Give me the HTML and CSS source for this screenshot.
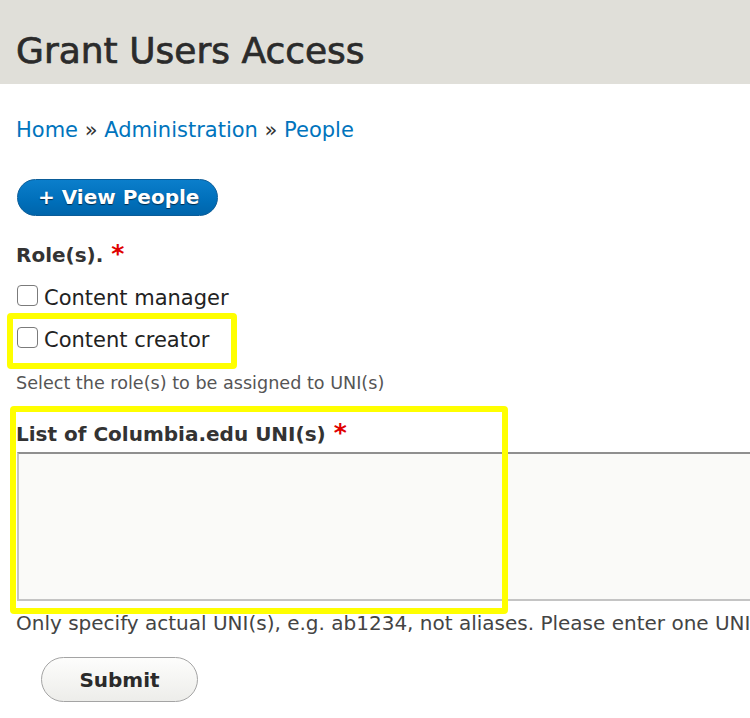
FILE: index.html
```html
<!DOCTYPE html>
<html lang="en">
<head>
<meta charset="utf-8">
<title>Grant Users Access</title>
<link rel="stylesheet" href="styles.css">
</head>
<body>
<header class="page-header">
  <h1 class="page-title">Grant Users Access</h1>
</header>
<main class="content">
  <nav class="breadcrumb"><a href="#">Home</a> » <a href="#">Administration</a> » <a href="#">People</a></nav>
  <div class="action-links">
    <a class="action-btn" href="#">+ View People</a>
  </div>
  <form class="grant-form">
    <div class="form-item roles">
      <div class="form-label">Role(s). <span class="req">*</span></div>
      <label class="check-row"><input type="checkbox" class="check"><span class="check-label">Content manager</span></label>
      <label class="check-row highlight hl-role"><input type="checkbox" class="check"><span class="check-label">Content creator</span></label>
      <div class="description">Select the role(s) to be assigned to UNI(s)</div>
    </div>
    <div class="form-item unis highlight hl-unis">
      <label class="form-label" for="unis">List of Columbia.edu UNI(s) <span class="req">*</span></label>
      <textarea id="unis" class="uni-text"></textarea>
    </div>
    <div class="description wide">Only specify actual UNI(s), e.g. ab1234, not aliases. Please enter one UNI per line.</div>
    <div class="form-actions">
      <button type="button" class="submit-btn">Submit</button>
    </div>
  </form>
</main>
</body>
</html>
```
FILE: styles.css
```css
html, body {
  margin: 0;
  padding: 0;
  overflow: hidden;
  background: #ffffff;
}
body {
  font-family: "DejaVu Sans", Verdana, sans-serif;
  color: #333333;
}
.page-header {
  background: #e0dfd9;
  height: 84px;
  box-sizing: border-box;
  padding: 30px 16px 0;
}
.page-title {
  margin: 0;
  font-size: 36px;
  line-height: 42px;
  font-weight: 400;
  color: #2b2b2b;
  -webkit-text-stroke: 0.7px #2b2b2b;
  white-space: nowrap;
}
.content {
  width: 1000px;
  padding: 31px 16px 0;
}
.breadcrumb {
  font-size: 21px;
  line-height: 30px;
  color: #333333;
}
.breadcrumb a {
  color: #0074bd;
  text-decoration: none;
}
.action-links {
  margin-top: 34px;
  display: flex;
}
.action-btn {
  display: inline-block;
  margin-left: 1px;
  padding: 5px 18px 5px 20px;
  line-height: 25px;
  font-size: 20px;
  font-weight: 700;
  color: #ffffff;
  text-decoration: none;
  background: linear-gradient(#0b7ecb, #006fba 60%, #0065ab);
  border: 1px solid #0a5c98;
  border-radius: 20px;
  text-shadow: 0 1px 1px #002a4a;
}
.grant-form {
  margin: 0;
}
.form-item {
  position: relative;
}
.roles {
  margin-top: 24px;
}
.form-label {
  display: block;
  font-size: 20px;
  line-height: 30px;
  font-weight: 700;
  color: #333333;
}
.req {
  color: #e00000;
  font-size: 25px;
  line-height: 0;
  margin-left: 1px;
}
.check-row {
  position: relative;
  display: flex;
  align-items: flex-start;
  height: 42px;
  font-size: 21px;
  line-height: 42px;
  color: #222222;
}
.roles .form-label + .check-row {
  margin-top: 7px;
}
.check {
  appearance: none;
  -webkit-appearance: none;
  margin: 8px 0 0 1px;
  width: 21px;
  height: 21px;
  box-sizing: border-box;
  border: 1.5px solid #7b7b7b;
  border-radius: 4px;
  background: #ffffff;
}
.check-label {
  margin-left: 6px;
}
.description {
  margin-top: 10px;
  font-size: 17.6px;
  line-height: 24px;
  color: #555555;
  white-space: nowrap;
}
.wide {
  font-size: 20px;
  color: #444444;
}
.unis {
  margin-top: 24px;
}
.uni-text {
  display: block;
  margin: 3px 0 0 1px;
  width: 900px;
  height: 149px;
  box-sizing: border-box;
  background: #fafaf8;
  border: 2px solid #c4c4c4;
  border-top-color: #8f8f8f;
  border-radius: 0;
  resize: none;
}
.form-actions {
  margin-top: 22px;
}
.submit-btn {
  margin-left: 25px;
  width: 157px;
  height: 45px;
  box-sizing: border-box;
  font-family: "DejaVu Sans", sans-serif;
  font-size: 20px;
  font-weight: 700;
  color: #2a2a2a;
  background: linear-gradient(#fdfdfc, #ededea);
  border: 1.5px solid #a4a4a4;
  border-radius: 23px;
  padding: 0;
}
.highlight::after {
  content: "";
  position: absolute;
  border: 6px solid #ffff00;
  border-radius: 4px;
  box-sizing: border-box;
  pointer-events: none;
}
.hl-role::after {
  top: -6px;
  left: -9px;
  width: 230px;
  height: 56px;
}
.hl-unis::after {
  top: -13px;
  left: -6px;
  width: 498px;
  height: 208px;
}
```
